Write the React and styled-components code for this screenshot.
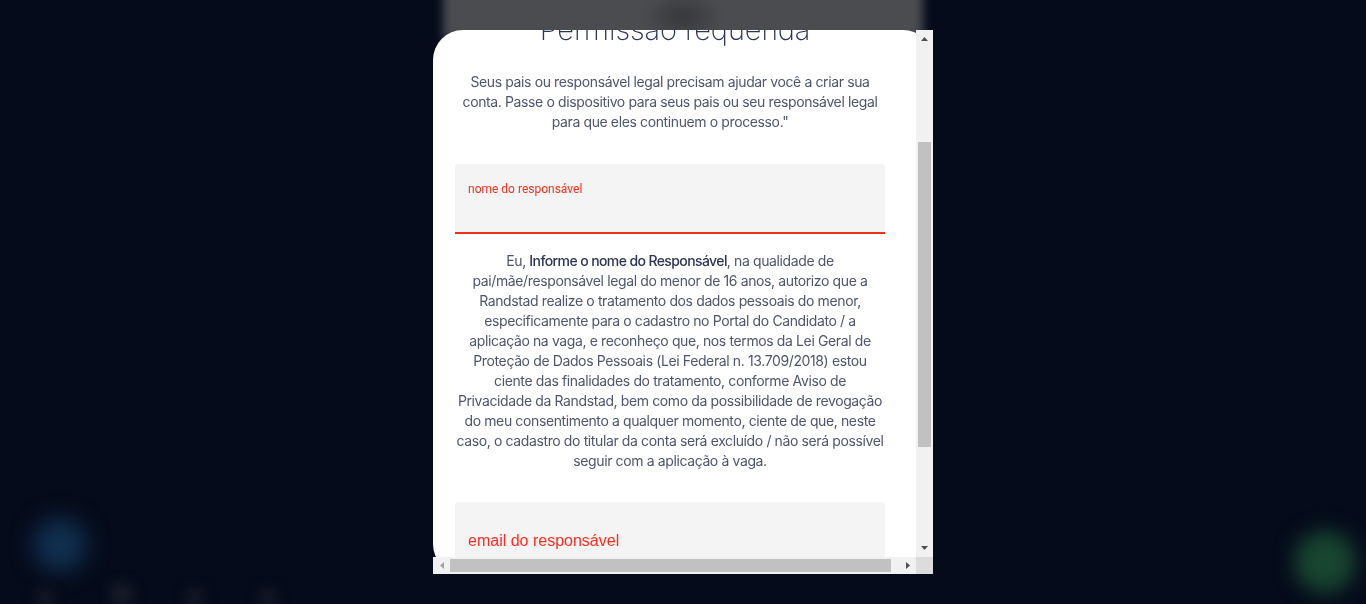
import React, { useEffect, useRef } from "react";
import styled, { createGlobalStyle } from "styled-components";

const Global = createGlobalStyle`
  html, body { margin: 0; padding: 0; height: 100%; background: #050b1a; overflow: hidden; }
  #root { height: 100%; }
`;

const Page = styled.div`
  height: 100vh;
  width: 100vw;
  background: #050b1a;
  display: flex;
  flex-direction: column;
  align-items: center;
  overflow: hidden;
`;

const HeaderBlur = styled.div`
  width: 480px;
  height: 60px;
  margin-top: -20px;
  background: radial-gradient(ellipse 40px 24px at 50% 60%, #35363a 0%, #4b4c50 100%);
  filter: blur(5px);
`;

const Fab = styled.div`
  position: fixed;
  left: ${(p) => p.$x - p.$r}px;
  top: ${(p) => p.$y - p.$r}px;
  width: ${(p) => p.$r * 2}px;
  height: ${(p) => p.$r * 2}px;
  border-radius: 50%;
  background: ${(p) => p.$color};
  filter: blur(${(p) => p.$blur}px);
`;

const Overlay = styled.div`
  position: fixed;
  inset: 0;
  display: flex;
  align-items: center;
  justify-content: center;
`;

const Modal = styled.div`
  width: 500px;
  height: 90vh;
  background: #ffffff;
  border-radius: 30px;
  display: grid;
  grid-template-columns: 1fr 17px;
  grid-template-rows: 1fr 17px;
`;

const Viewport = styled.div`
  overflow: hidden;
  min-width: 0;
  min-height: 0;
`;

const VBar = styled.div`
  background: #f1f1f1;
  display: flex;
  flex-direction: column;
`;

const HBar = styled.div`
  background: #f1f1f1;
  display: flex;
`;

const Corner = styled.div`
  background: #dcdcdc;
`;

const ArrowBtn = styled.div`
  width: 17px;
  height: 17px;
  flex: none;
  display: flex;
  align-items: center;
  justify-content: center;
`;

const Track = styled.div`
  flex: 1;
  display: flex;
  flex-direction: ${(p) => (p.$vertical ? "column" : "row")};
  padding: ${(p) => (p.$vertical ? "0 2px" : "2px 0")};
`;

const Thumb = styled.div`
  background: #c1c1c1;
  ${(p) =>
    p.$vertical
      ? `margin-top: ${p.$offset}px; height: ${p.$size}px;`
      : `margin-left: ${p.$offset}px; width: ${p.$size}px;`}
`;

const Content = styled.div`
  width: 492px;
  box-sizing: border-box;
  padding: 40px 40px 58px 22px;
  display: flex;
  flex-direction: column;
  align-items: center;
  font-family: Inter, "Noto Sans", sans-serif;
`;

const Icon = styled.div`
  width: 80px;
  height: 80px;
  margin-bottom: 24px;
  display: flex;
  align-items: center;
  justify-content: center;
`;

const Title = styled.h1`
  margin: 0;
  padding-left: 10px;
  font-size: 29px;
  line-height: 40px;
  font-weight: 200;
  letter-spacing: -0.1px;
  color: #2b3452;
  text-align: center;
`;

const Paragraph = styled.p`
  margin: ${(p) => p.$mt}px 0 0;
  font-size: 14px;
  line-height: 20px;
  color: #4f566c;
  text-align: center;
  letter-spacing: -0.38px;
  b { font-weight: 500; color: #2b3452; letter-spacing: -0.6px; }
`;

const Line = styled.span`
  display: block;
  white-space: nowrap;
`;

const Field = styled.div`
  width: 430px;
  height: ${(p) => p.$h}px;
  margin-top: ${(p) => p.$mt}px;
  box-sizing: border-box;
  background: #f4f4f4;
  border-radius: 4px 4px 0 0;
  border-bottom: ${(p) => (p.$active ? "2px solid #f02d1b" : "none")};
  padding: ${(p) => p.$pt}px 13px 0;
  display: flex;
  flex-direction: column;
`;

const SmallLabel = styled.label`
  font-family: Roboto, "Liberation Sans", sans-serif;
  font-size: 12px;
  line-height: 16px;
  color: #f0321e;
`;

const BigLabel = styled.label`
  font-family: "Liberation Sans", Arial, sans-serif;
  font-size: 16px;
  line-height: 20px;
  color: #ff2d20;
`;

const Button = styled.button`
  margin-top: 40px;
  width: 430px;
  height: 48px;
  border: none;
  border-radius: 24px;
  background: #2175d9;
  color: #fff;
  font-family: Inter, sans-serif;
  font-size: 16px;
`;

const Tri = ({ dir, color }) => {
  const pts = {
    up: "0,4 3.5,0 7,4",
    down: "0,0 3.5,4 7,0",
    left: "4,0 0,3.5 4,7",
    right: "0,0 4,3.5 0,7",
  }[dir];
  const vertical = dir === "up" || dir === "down";
  return (
    <svg width={vertical ? 7 : 4} height={vertical ? 4 : 7} viewBox={vertical ? "0 0 7 4" : "0 0 4 7"}>
      <polygon points={pts} fill={color} />
    </svg>
  );
};

const consent = [
  <>Eu, <b>Informe o nome do Responsável</b>, na qualidade de</>,
  "pai/mãe/responsável legal do menor de 16 anos, autorizo que a",
  "Randstad realize o tratamento dos dados pessoais do menor,",
  "especificamente para o cadastro no Portal do Candidato / a",
  "aplicação na vaga, e reconheço que, nos termos da Lei Geral de",
  "Proteção de Dados Pessoais (Lei Federal n. 13.709/2018) estou",
  "ciente das finalidades do tratamento, conforme Aviso de",
  "Privacidade da Randstad, bem como da possibilidade de revogação",
  "do meu consentimento a qualquer momento, ciente de que, neste",
  "caso, o cadastro do titular da conta será excluído / não será possível",
  "seguir com a aplicação à vaga.",
];

export default function App() {
  const ref = useRef(null);
  useEffect(() => {
    if (ref.current) ref.current.scrollTop = 164;
  }, []);
  return (
    <>
      <Global />
      <Page>
        <HeaderBlur />
      </Page>
      <Fab $x={60} $y={545} $r={27} $color="#112f50" $blur={11} />
      <Fab $x={1325} $y={562} $r={31} $color="#184530" $blur={10} />
      <Fab $x={45} $y={598} $r={10} $color="#141825" $blur={6} />
      <Fab $x={122} $y={594} $r={12} $color="#171b28" $blur={6} />
      <Fab $x={195} $y={598} $r={10} $color="#141825" $blur={6} />
      <Fab $x={268} $y={598} $r={10} $color="#141825" $blur={6} />
      <Overlay>
        <Modal>
          <Viewport ref={ref}>
            <Content>
              <Icon>
                <svg width="64" height="64" viewBox="0 0 24 24" fill="none" stroke="#2175d9" strokeWidth="1.5">
                  <rect x="5" y="11" width="14" height="10" rx="2" />
                  <path d="M8 11V7a4 4 0 0 1 8 0v4" />
                </svg>
              </Icon>
              <Title>Permissão requerida</Title>
              <Paragraph $mt={22}>
                <Line>Seus pais ou responsável legal precisam ajudar você a criar sua</Line>
                <Line>conta. Passe o dispositivo para seus pais ou seu responsável legal</Line>
                <Line>para que eles continuem o processo."</Line>
              </Paragraph>
              <Field $mt={32} $h={70} $pt={17} $active>
                <SmallLabel>nome do responsável</SmallLabel>
              </Field>
              <Paragraph $mt={17}>
                {consent.map((l, i) => (
                  <Line key={i}>{l}</Line>
                ))}
              </Paragraph>
              <Field $mt={31} $h={68} $pt={29}>
                <BigLabel>email do responsável</BigLabel>
              </Field>
              <Button>Continuar</Button>
            </Content>
          </Viewport>
          <VBar>
            <ArrowBtn><Tri dir="up" color="#505050" /></ArrowBtn>
            <Track $vertical>
              <Thumb $vertical $offset={95} $size={305} />
            </Track>
            <ArrowBtn><Tri dir="down" color="#505050" /></ArrowBtn>
          </VBar>
          <HBar>
            <ArrowBtn><Tri dir="left" color="#a3a3a3" /></ArrowBtn>
            <Track>
              <Thumb $offset={0} $size={441} />
            </Track>
            <ArrowBtn><Tri dir="right" color="#505050" /></ArrowBtn>
          </HBar>
          <Corner />
        </Modal>
      </Overlay>
    </>
  );
}
